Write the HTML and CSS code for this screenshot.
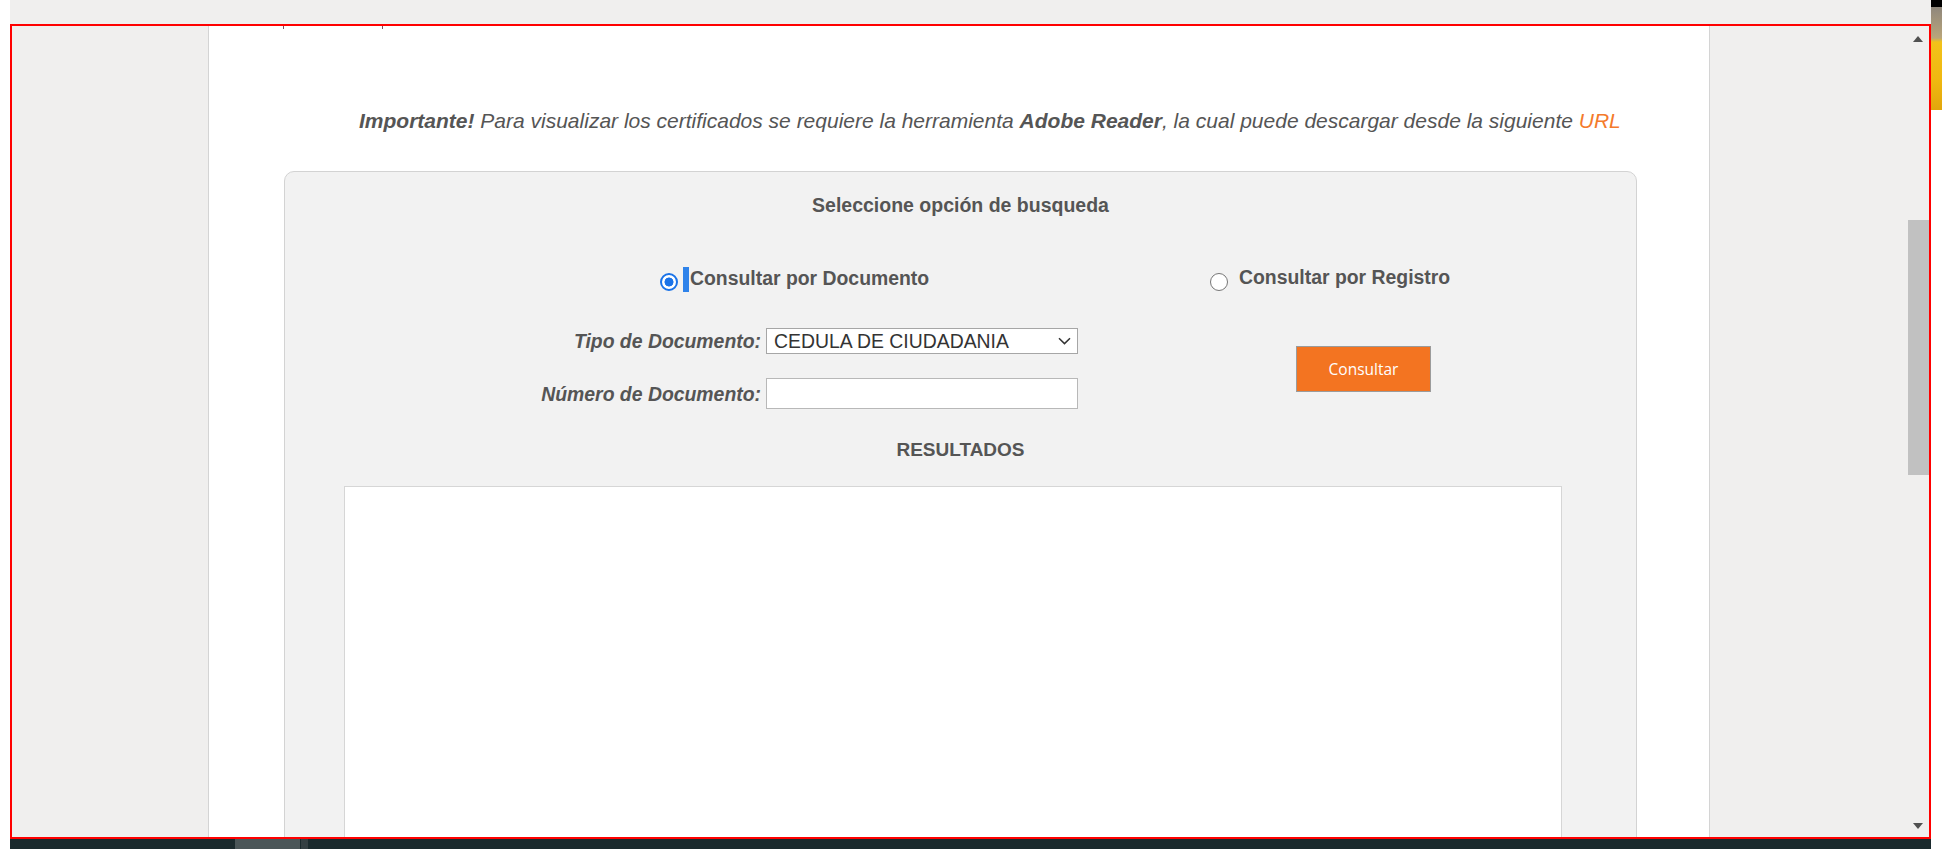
FILE: index.html
```html
<!DOCTYPE html>
<html lang="es">
<head>
<meta charset="utf-8">
<title>Consulta de certificados</title>
<link rel="stylesheet" href="styles.css">
</head>
<body>
<div class="screen">
  <div class="topband"></div>
  <div class="frame">
    <div class="gutter"></div>
    <div class="column">
      <div class="marks"><span class="mark mark-a"></span><span class="mark mark-b"></span></div>
      <p class="notice"><b>Importante!</b> Para visualizar los certificados se requiere la herramienta <b>Adobe Reader</b>, la cual puede descargar desde la siguiente <a class="url" href="#">URL</a></p>
      <div class="card">
        <div class="card-title">Seleccione opción de busqueda</div>
        <div class="options">
          <div class="opt-left">
            <div class="radio-row radio-row-left">
              <input class="radio" type="radio" name="modo" checked>
              <span class="sel-bar"></span>
              <span class="radio-label">Consultar por Documento</span>
            </div>
            <div class="form">
              <div class="form-row">
                <label class="field-label">Tipo de Documento:</label>
                <div class="select-wrap">
                  <select class="select">
                    <option>CEDULA DE CIUDADANIA</option>
                  </select>
                  <svg class="chev" width="13" height="8" viewBox="0 0 13 8"><path d="M1 1.2 L6.5 6.6 L12 1.2" fill="none" stroke="#333" stroke-width="1.5"/></svg>
                </div>
              </div>
              <div class="form-row form-row-2">
                <label class="field-label">Número de Documento:</label>
                <input class="text-input" type="text">
              </div>
            </div>
          </div>
          <div class="opt-right">
            <div class="radio-row radio-row-right">
              <input class="radio" type="radio" name="modo">
              <span class="radio-label radio-label-right">Consultar por Registro</span>
            </div>
            <button class="btn" type="button">Consultar</button>
          </div>
        </div>
        <div class="results-title">RESULTADOS</div>
        <div class="results"></div>
      </div>
    </div>
    <div class="gutter"></div>
    <div class="scrollbar">
      <span class="arrow-up"></span>
      <span class="thumb"></span>
      <span class="spacer"></span>
      <span class="arrow-down"></span>
    </div>
  </div>
  <div class="taskbar"><span class="tb-seg"></span><span class="tb-seg2"></span></div>
</div>
<div class="side"></div>
</body>
</html>
```
FILE: styles.css
```css
html, body {
  margin: 0;
  padding: 0;
  background: #ffffff;
  overflow: hidden;
}
body {
  display: flex;
  width: 1942px;
  height: 863px;
  font-family: "Liberation Sans", Arial, sans-serif;
  color: #555555;
}
.screen {
  margin-left: 10px;
  width: 1921px;
  display: flex;
  flex-direction: column;
}
.topband {
  height: 24px;
  background: #f0efee;
}
.frame {
  box-sizing: border-box;
  height: 815px;
  border: 2px solid #ff0000;
  display: flex;
  overflow: hidden;
  background: #f0efee;
}
.gutter {
  width: 196px;
  flex: none;
  background: #f0efee;
}
.column {
  width: 1500px;
  flex: none;
  background: #ffffff;
  border-left: 1px solid #d4d4d4;
  border-right: 1px solid #d4d4d4;
  overflow: hidden;
}
.marks {
  height: 3px;
  display: flex;
}
.mark {
  width: 1px;
  height: 3px;
  background: #7a5060;
}
.mark-a { margin-left: 74px; }
.mark-b { margin-left: 98px; }
.notice {
  margin: 80px 0 0 150px;
  font-size: 21px;
  line-height: 24px;
  font-style: italic;
  color: #555555;
  white-space: nowrap;
}
.notice b { font-weight: bold; }
.url {
  color: #f47a2b;
  text-decoration: none;
}
.card {
  margin: 38px 0 0 75px;
  width: 1353px;
  height: 800px;
  box-sizing: border-box;
  background: #f2f2f2;
  border: 1px solid #d3d3d3;
  border-radius: 10px;
  padding-top: 22px;
}
.card-title {
  text-align: center;
  font-weight: bold;
  font-size: 19.5px;
  line-height: 22px;
}
.options {
  margin-top: 51px;
  display: grid;
  grid-template-columns: 793px 1fr;
}
.radio-row {
  display: flex;
  align-items: flex-start;
  height: 25px;
}
.radio-row-left { padding-left: 375px; }
.radio-row-right { padding-left: 132px; }
.radio {
  appearance: none;
  -webkit-appearance: none;
  margin: 6px 0 0 0;
  width: 18px;
  height: 18px;
  box-sizing: border-box;
  border-radius: 50%;
  border: 1.5px solid #767676;
  background: #ffffff;
  flex: none;
}
.radio:checked {
  border: 2px solid #1a73e8;
  background: radial-gradient(circle, #1a73e8 0 4.2px, #ffffff 4.8px);
}
.sel-bar {
  margin-left: 5px;
  width: 6px;
  height: 25px;
  background: #2f83ea;
}
.radio-label {
  margin-left: 1px;
  font-weight: bold;
  font-size: 19.4px;
  line-height: 22px;
  white-space: nowrap;
}
.radio-label-right { margin-left: 11px; margin-top: -1px; }
.form { margin-top: 36px; }
.form-row {
  display: grid;
  grid-template-columns: 476px 312px;
  column-gap: 5px;
  align-items: center;
}
.form-row-2 { margin-top: 24px; }
.field-label {
  text-align: right;
  font-weight: bold;
  font-style: italic;
  font-size: 19.4px;
  line-height: 22px;
  white-space: nowrap;
}
.select-wrap {
  position: relative;
  height: 26px;
}
.select {
  appearance: none;
  -webkit-appearance: none;
  box-sizing: border-box;
  width: 312px;
  height: 26px;
  margin: 0;
  padding: 0 0 0 7px;
  border: 1px solid #a6a6a6;
  border-radius: 0;
  background: #ffffff;
  font-family: "Liberation Sans", Arial, sans-serif;
  font-size: 19.4px;
  color: #333333;
}
.chev {
  position: absolute;
  right: 7px;
  top: 9px;
}
.text-input {
  box-sizing: border-box;
  width: 312px;
  height: 31px;
  margin: 0;
  border: 1px solid #b8b8b8;
  background: #ffffff;
}
.btn {
  display: block;
  margin: 54px 0 0 218px;
  width: 135px;
  height: 46px;
  box-sizing: border-box;
  background: #f37421;
  border: 1px solid #9b9b9b;
  color: #ffffff;
  font-family: "Open Sans", sans-serif;
  font-size: 15.5px;
  padding: 0;
}
.results-title {
  margin-top: 30px;
  text-align: center;
  font-weight: bold;
  font-size: 19px;
  line-height: 22px;
}
.results {
  margin: 25px 0 0 59px;
  width: 1218px;
  height: 500px;
  box-sizing: border-box;
  background: #ffffff;
  border: 1px solid #d6d6d6;
}
.scrollbar {
  width: 23px;
  flex: none;
  display: flex;
  flex-direction: column;
  background: #f0efee;
}
.arrow-up {
  margin: 10px 0 0 7px;
  width: 0;
  height: 0;
  border-left: 5.5px solid transparent;
  border-right: 5.5px solid transparent;
  border-bottom: 6px solid #505050;
}
.thumb {
  margin: 178px 0 0 2px;
  width: 21px;
  height: 255px;
  background: #c1c1c1;
}
.spacer { flex: 1; }
.arrow-down {
  margin: 0 0 8px 7px;
  width: 0;
  height: 0;
  border-left: 5.5px solid transparent;
  border-right: 5.5px solid transparent;
  border-top: 6px solid #505050;
}
.taskbar {
  height: 10px;
  background: #1b2a2d;
  display: flex;
}
.tb-seg {
  margin-left: 225px;
  width: 65px;
  background: #4b5658;
}
.tb-seg2 {
  margin-left: 1px;
  width: 7px;
  background: #343f42;
}
.side {
  width: 11px;
  height: 110px;
  background: linear-gradient(to bottom, #000000 0 7px, #8f877c 7px, #b9a57a 38px, #f2c21a 42px, #f0b810 80px, #e2a60c 110px);
}
```
